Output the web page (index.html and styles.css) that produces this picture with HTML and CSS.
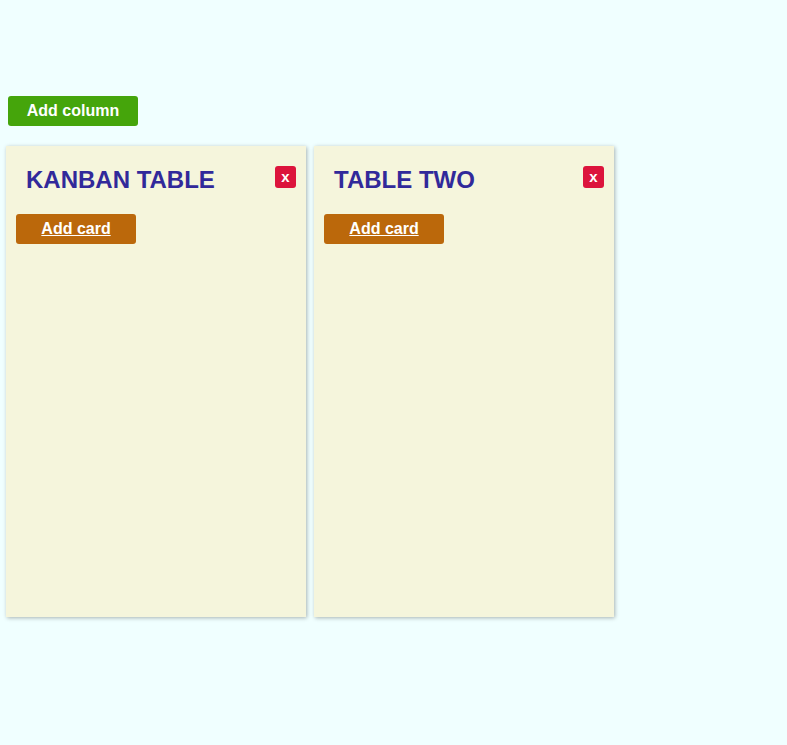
FILE: index.html
```html
<!DOCTYPE html>
<html>
<head>
<meta charset="utf-8">
<link rel="stylesheet" href="styles.css">
</head>
<body>
<div class="app">
  <div class="toolbar">
    <button class="add-column">Add column</button>
  </div>
  <div class="board">
    <div class="column">
      <div class="column-header">
        <h2 class="column-title">KANBAN TABLE</h2>
        <button class="close">x</button>
      </div>
      <button class="add-card">Add card</button>
    </div>
    <div class="column">
      <div class="column-header">
        <h2 class="column-title">TABLE TWO</h2>
        <button class="close">x</button>
      </div>
      <button class="add-card">Add card</button>
    </div>
  </div>
</div>
</body>
</html>
```
FILE: styles.css
```css
html, body {
  background: #f0ffff;
}
body {
  margin: 0;
  font-family: "Liberation Sans", Arial, sans-serif;
}
.app {
  padding: 96px 0 40px 6px;
}
.add-column {
  display: block;
  margin-left: 2px;
  width: 130px;
  height: 30px;
  border: none;
  border-radius: 3px;
  background: #45a50b;
  color: #fff;
  font-family: "Liberation Sans", Arial, sans-serif;
  font-weight: bold;
  font-size: 16px;
  padding: 0;
}
.board {
  display: flex;
  gap: 8px;
  margin-top: 20px;
}
.column {
  width: 300px;
  height: 471px;
  box-sizing: border-box;
  background: #f5f5dc;
  box-shadow: 1px 1px 4px rgba(0, 0, 0, 0.3);
  padding: 20px 10px 10px 10px;
}
.column-header {
  display: flex;
  justify-content: space-between;
  align-items: flex-start;
}
.column-title {
  margin: 0;
  padding-left: 10px;
  font-size: 24px;
  font-weight: bold;
  color: #31299a;
}
.close {
  width: 21px;
  height: 22px;
  border: none;
  border-radius: 3px;
  background: #dc143c;
  color: #fff;
  font-family: "Liberation Sans", Arial, sans-serif;
  font-weight: bold;
  font-size: 15px;
  padding: 0;
  line-height: 20px;
}
.add-card {
  display: block;
  margin-top: 20px;
  width: 120px;
  height: 30px;
  border: none;
  border-radius: 3px;
  background: #bb680b;
  color: #fff;
  font-family: "Liberation Sans", Arial, sans-serif;
  font-weight: bold;
  font-size: 16px;
  text-decoration: underline;
  padding: 0;
}
```
